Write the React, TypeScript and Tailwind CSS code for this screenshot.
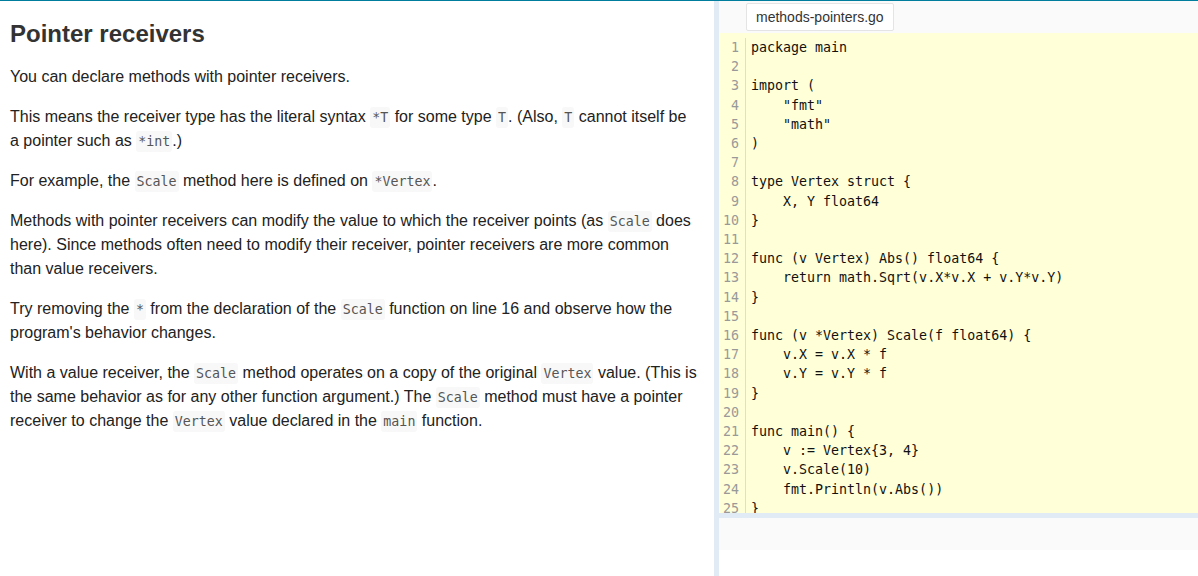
import React from 'react';

const codeLines = [
  'package main',
  '',
  'import (',
  '\t"fmt"',
  '\t"math"',
  ')',
  '',
  'type Vertex struct {',
  '\tX, Y float64',
  '}',
  '',
  'func (v Vertex) Abs() float64 {',
  '\treturn math.Sqrt(v.X*v.X + v.Y*v.Y)',
  '}',
  '',
  'func (v *Vertex) Scale(f float64) {',
  '\tv.X = v.X * f',
  '\tv.Y = v.Y * f',
  '}',
  '',
  'func main() {',
  '\tv := Vertex{3, 4}',
  '\tv.Scale(10)',
  '\tfmt.Println(v.Abs())',
  '}',
];

const C: React.FC<{ children: React.ReactNode }> = ({ children }) => (
  <code className="font-['DejaVu_Sans_Mono',monospace] text-[13.3px] leading-none text-[#555] bg-[#f8f8f8] rounded-[3px] px-[2px] py-[3px]">
    {children}
  </code>
);

const App: React.FC = () => {
  return (
    <div className="w-[1198px] h-[576px] overflow-hidden flex border-t border-[#007d9c] bg-white">
      <div className="w-[714px] shrink-0 pl-[10px] pr-[16px] pt-[18px] font-['Liberation_Sans',Arial,sans-serif] text-[16px] leading-[24px] text-[#222]">
        <h1 className="text-[24px] leading-[29px] font-bold text-[#333] mb-[17px]">Pointer receivers</h1>
        <p className="mb-4">You can declare methods with pointer receivers.</p>
        <p className="mb-4">
          This means the receiver type has the literal syntax <C>*T</C> for some type <C>T</C>. (Also, <C>T</C> cannot
          itself be a pointer such as <C>*int</C>.)
        </p>
        <p className="mb-4">
          For example, the <C>Scale</C> method here is defined on <C>*Vertex</C>.
        </p>
        <p className="mb-4">
          Methods with pointer receivers can modify the value to which the receiver points (as <C>Scale</C> does
          here). Since methods often need to modify their receiver, pointer receivers are more common than value
          receivers.
        </p>
        <p className="mb-4">
          Try removing the <C>*</C> from the declaration of the <C>Scale</C> function on line 16 and observe how the
          program's behavior changes.
        </p>
        <p className="mb-4">
          With a value receiver, the <C>Scale</C> method operates on a copy of the original <C>Vertex</C> value.
          (This is the same behavior as for any other function argument.) The <C>Scale</C> method must have a
          pointer receiver to change the <C>Vertex</C> value declared in the <C>main</C> function.
        </p>
      </div>

      <div className="w-[5px] shrink-0 bg-[#e0ebf5]" />

      <div className="flex-1 flex flex-col min-w-0">
        <div className="h-[32px] shrink-0 bg-[#fafafa] pl-[27px] pt-[2px]">
          <div className="inline-block h-[28px] px-[9px] bg-white border border-[#e4e4e4] rounded-[2px] font-['Liberation_Sans',Arial,sans-serif] text-[14px] leading-[26px] text-[#333]">
            methods-pointers.go
          </div>
        </div>

        <div className="h-[480px] shrink-0 overflow-hidden bg-[#ffffd8] flex font-['DejaVu_Sans_Mono',monospace] text-[13.3px] leading-[19.2px] pt-[5px]">
          <div className="w-[27px] shrink-0 border-r border-[#dddddd] pr-[6px] text-right text-[#999]">
            {codeLines.map((_, i) => (
              <div key={i}>{i + 1}</div>
            ))}
          </div>
          <pre className="pl-[5px] text-[#111] font-['DejaVu_Sans_Mono',monospace] [tab-size:4]">
            {codeLines.map((l, i) => (
              <div key={i}>{l === '' ? '\u00a0' : l}</div>
            ))}
          </pre>
        </div>

        <div className="h-[5px] shrink-0 bg-[#e0ebf5]" />
        <div className="h-[32px] shrink-0 bg-[#fafafa]" />
        <div className="flex-1 bg-white" />
      </div>
    </div>
  );
};

export default App;
